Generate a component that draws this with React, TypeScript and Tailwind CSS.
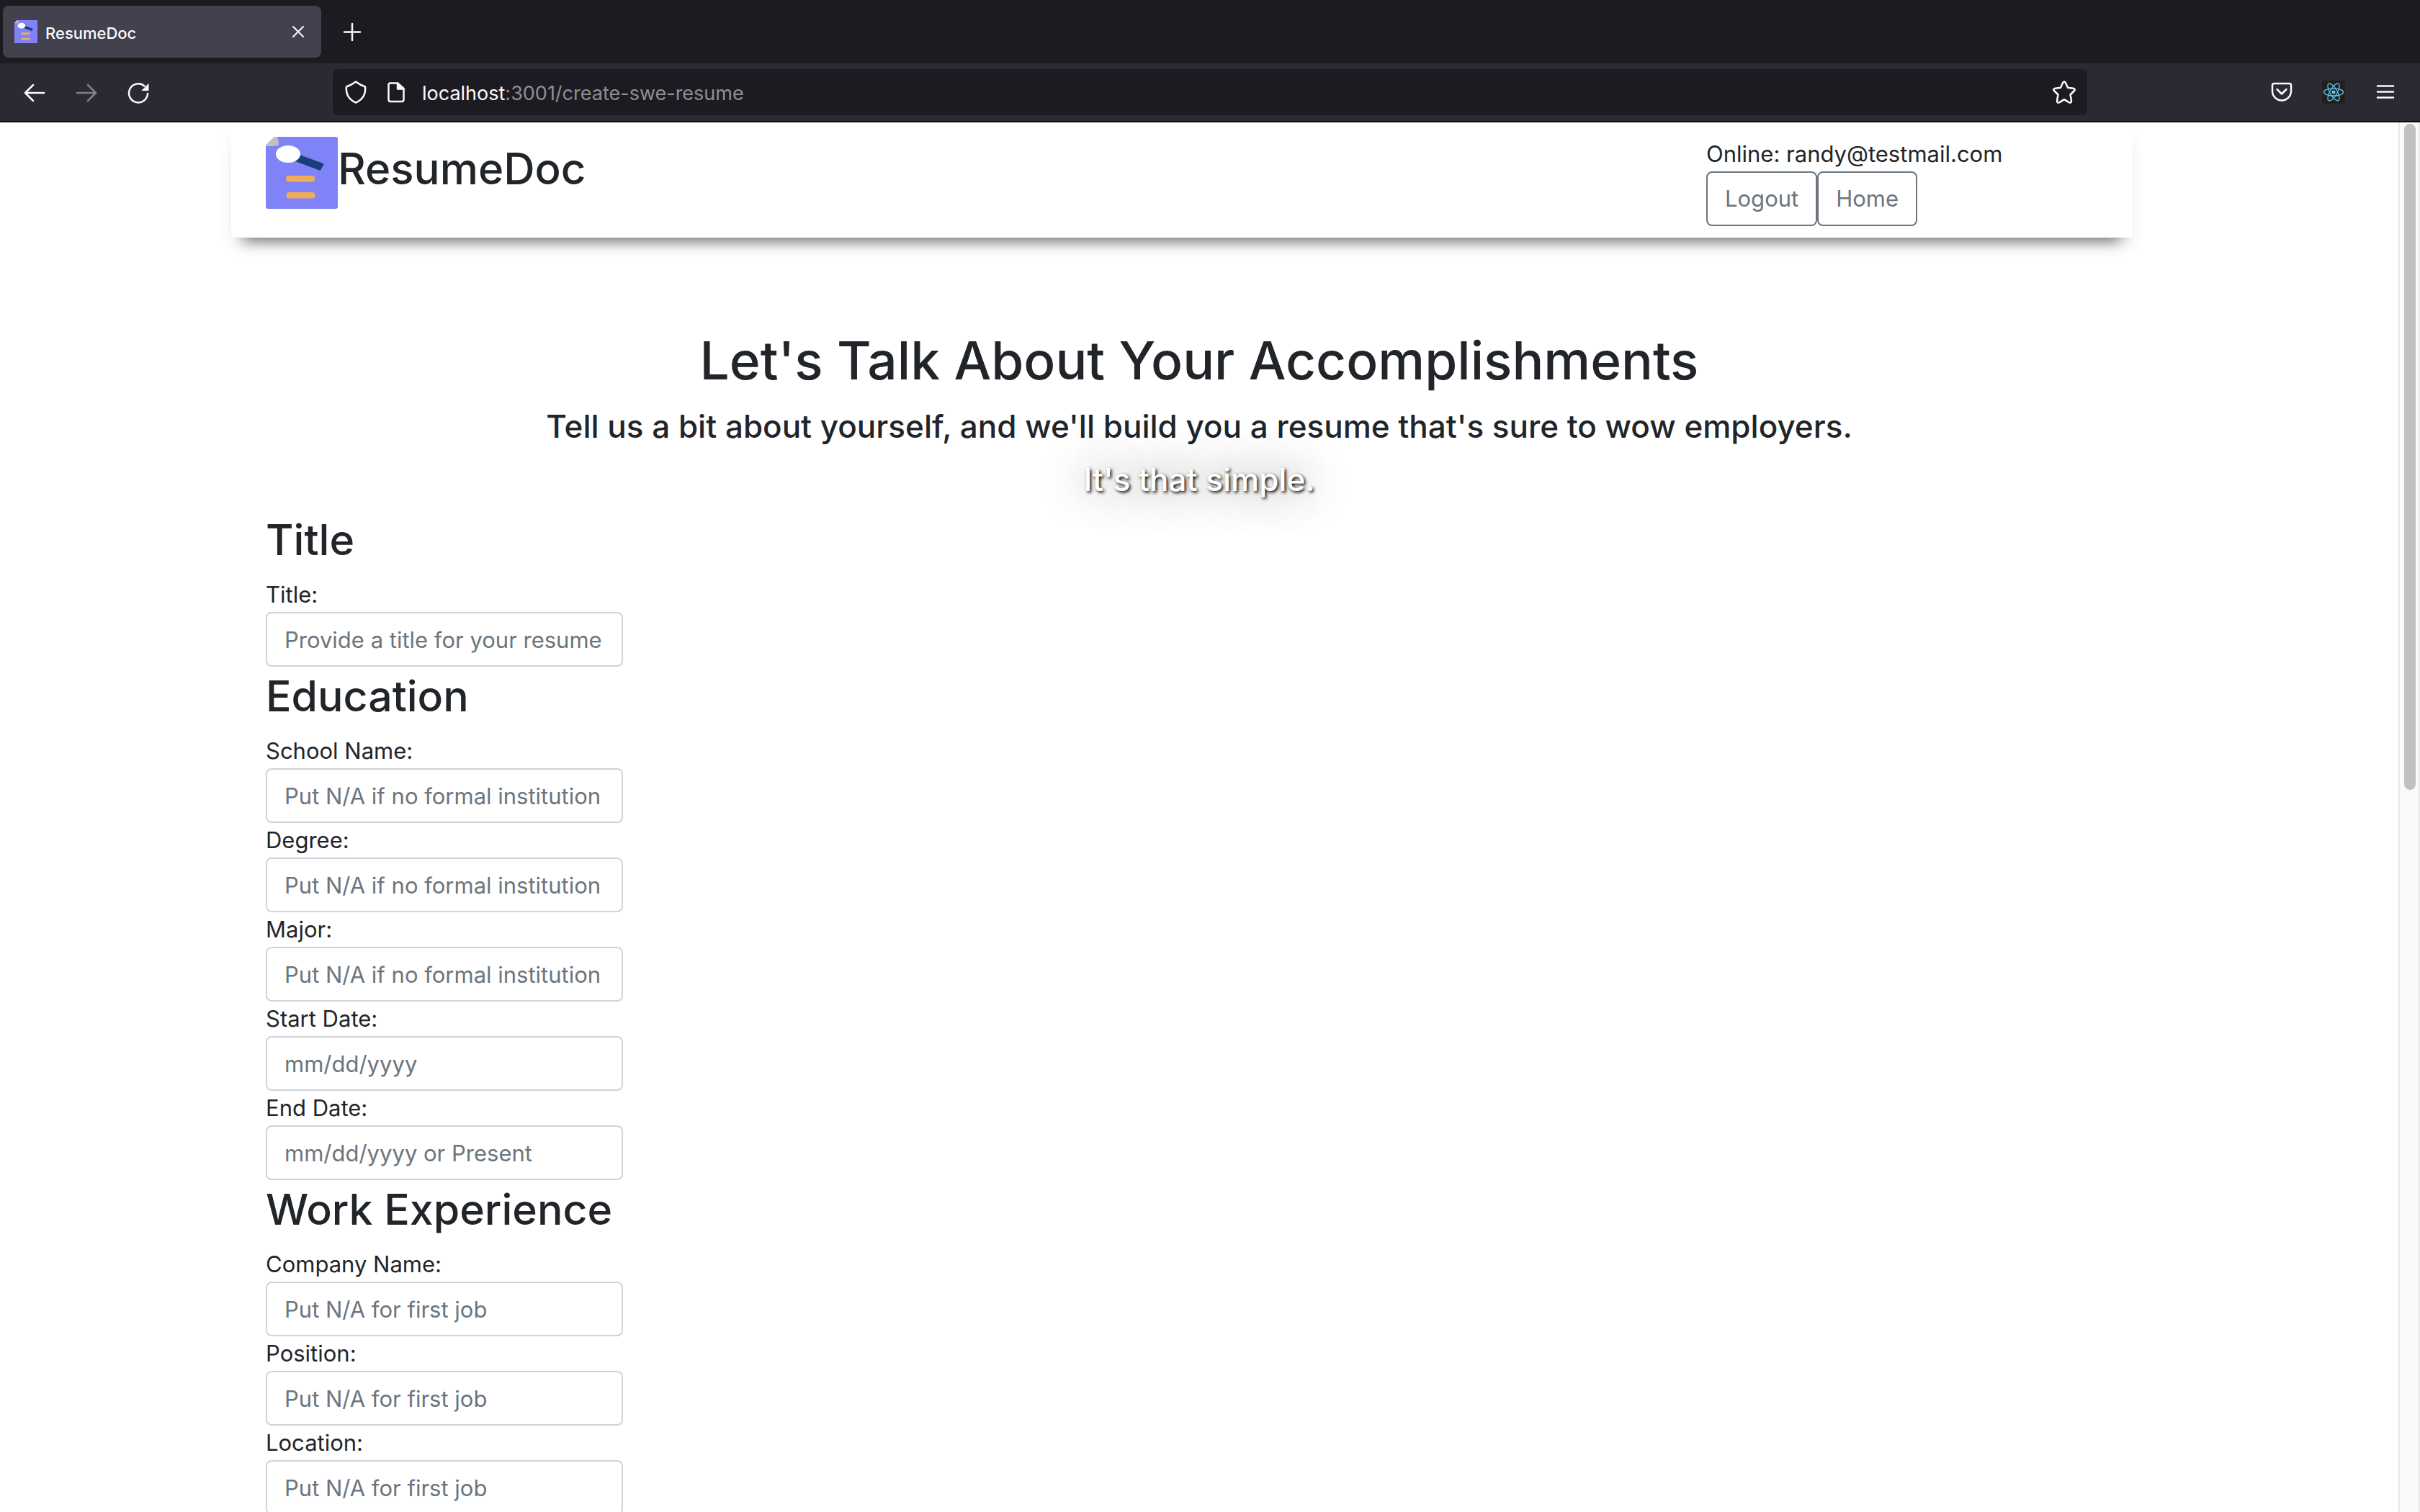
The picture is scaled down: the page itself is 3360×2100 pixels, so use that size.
import React from "react";

type Field = { id: string; label: string; placeholder: string };
type Section = { heading: string; fields: Field[] };

const sections: Section[] = [
  {
    heading: "Title",
    fields: [{ id: "title", label: "Title:", placeholder: "Provide a title for your resume" }],
  },
  {
    heading: "Education",
    fields: [
      { id: "school", label: "School Name:", placeholder: "Put N/A if no formal institution" },
      { id: "degree", label: "Degree:", placeholder: "Put N/A if no formal institution" },
      { id: "major", label: "Major:", placeholder: "Put N/A if no formal institution" },
      { id: "start-date", label: "Start Date:", placeholder: "mm/dd/yyyy" },
      { id: "end-date", label: "End Date:", placeholder: "mm/dd/yyyy or Present" },
    ],
  },
  {
    heading: "Work Experience",
    fields: [
      { id: "company", label: "Company Name:", placeholder: "Put N/A for first job" },
      { id: "position", label: "Position:", placeholder: "Put N/A for first job" },
      { id: "location", label: "Location:", placeholder: "Put N/A for first job" },
    ],
  },
];

function Logo({ className }: { className: string }) {
  return (
    <svg viewBox="0 0 100 100" preserveAspectRatio="none" className={className} aria-hidden="true">
      <path d="M12 0H97Q100 0 100 3V97Q100 100 97 100H3Q0 100 0 97V12Z" fill="#8083f8" />
      <path d="M12 0H16Q18 5 18 10Q18 12 15 12.500Q8 13 0 13V11.500Z" fill="#c0c0c0" />
      <path d="M47 25L81 37.500L75.500 47L41 34Z" fill="#173f7c" />
      <ellipse cx="31" cy="24" rx="17" ry="12" fill="#fff" />
      <rect x="28" y="54" width="40" height="8.500" rx="4" fill="#f0ad57" />
      <rect x="28.500" y="77" width="40" height="8.500" rx="4" fill="#f0ad57" />
    </svg>
  );
}

type IconProps = { children: React.ReactNode; className?: string };

function Icon({ children, className = "size-8" }: IconProps) {
  return (
    <svg
      viewBox="0 0 32 32"
      className={className}
      fill="none"
      stroke="currentColor"
      strokeWidth="2.500"
      strokeLinecap="round"
      strokeLinejoin="round"
      aria-hidden="true"
    >
      {children}
    </svg>
  );
}

function TabStrip() {
  return (
    <div className="flex h-[88px] shrink-0 items-center bg-[#1c1b22] pl-1 text-[#fbfbfe]">
      <div className="flex h-[72px] w-[442px] items-center rounded-lg bg-[#42414d] pr-4 pl-4">
        <Logo className="size-8" />
        <span className="ml-[11px] flex-1 pt-1 text-[22px] leading-8 font-medium">ResumeDoc</span>
        <button aria-label="Close tab">
          <Icon>
            <path d="M9 9L23 23M23 9L9 23" strokeWidth="2" />
          </Icon>
        </button>
      </div>
      <button aria-label="New tab" className="ml-[27px]">
        <Icon>
          <path d="M16 5V28M5 16.500H27" strokeWidth="2.500" />
        </Icon>
      </button>
    </div>
  );
}

function Toolbar() {
  return (
    <div className="flex h-[82px] shrink-0 items-center border-b-2 border-[#0c0c0d] bg-[#2b2a33] pr-8 pl-8 text-[#fbfbfe]">
      <div className="flex w-[430px] shrink-0 gap-10">
        <button aria-label="Back">
          <Icon>
            <path d="M29 17H3M14 6L3 17L14 28" />
          </Icon>
        </button>
        <button aria-label="Forward" disabled className="text-[#808086]">
          <Icon>
            <path d="M3 17H29M18 6L29 17L18 28" />
          </Icon>
        </button>
        <button aria-label="Reload">
          <Icon>
            <path d="M29 18A13 13 0 1 1 24.500 7.500" />
            <path d="M30 5V13.500H21.500Z" fill="currentColor" strokeWidth="1" />
          </Icon>
        </button>
      </div>
      <div className="flex h-16 min-w-0 flex-1 items-center rounded-lg bg-[#1c1b22] px-4">
        <Icon>
          <path d="M16 1.500Q22 6 29 8.500C30 18 26 26 16 30.500C6 26 2 18 3 8.500Q10 6 16 1.500Z" />
        </Icon>
        <Icon className="ml-6 size-8">
          <path d="M7 3.500H18L26.500 11V26Q26.500 29 24 29H8Q5.500 29 5.500 26V6Q5.500 3.500 8 3.500Z" />
          <path d="M18 3.500V11.500H26.500Z" fill="currentColor" />
        </Icon>
        <p className="ml-5 min-w-0 flex-1 pt-1 text-[27px] leading-9 text-[#8f8f94]">
          <span className="text-[#fbfbfe]">localhost</span>:3001/create-swe-resume
        </p>
        <button aria-label="Bookmark this page">
          <Icon>
            <path d="M14.200 2.800Q16 0 17.800 2.800L21 9.800L28.500 10.700Q32 11.500 30 14L24.500 19.500L26 28Q26 31.500 23 30.300L16 26.200L9 30.300Q6 31.500 6 28L7.500 19.500L2 14Q0 11.500 3.500 10.700L11 9.800Z" />
          </Icon>
        </button>
      </div>
      <div className="flex shrink-0 gap-10 pl-[254px]">
        <button aria-label="Save to Pocket">
          <Icon>
            <path d="M5.500 4H26.500Q29 4 29 6.500V14.500A13 13 0 0 1 3 14.500V6.500Q3 4 5.500 4Z" />
            <path d="M9.500 12L16 18.500L22.500 12" />
          </Icon>
        </button>
        <button aria-label="React Developer Tools">
          <svg viewBox="0 0 32 32" className="size-8" fill="none" stroke="#61c4ee" strokeWidth="1.300" aria-hidden="true">
            <rect width="32" height="32" rx="3" fill="#20201f" stroke="none" />
            <ellipse cx="16" cy="16" rx="13.500" ry="5" />
            <ellipse cx="16" cy="16" rx="13.500" ry="5" transform="rotate(60 16 16)" />
            <ellipse cx="16" cy="16" rx="13.500" ry="5" transform="rotate(120 16 16)" />
            <circle cx="16" cy="16" r="2.500" fill="#61c4ee" stroke="none" />
          </svg>
        </button>
        <button aria-label="Open application menu">
          <Icon>
            <path d="M5 7.500H27M5 15.500H27M5 23.500H27" />
          </Icon>
        </button>
      </div>
    </div>
  );
}

function SiteHeader() {
  return (
    <header className="-ml-12 flex h-40 items-start bg-white pt-5 pl-12 shadow-[0_20px_20px_-16px_rgba(0,0,0,0.6),0_12px_24px_rgba(0,0,0,0.03)]">
      <a href="#home" className="flex items-start">
        <Logo className="size-[100px]" />
        <span className="text-[60px] leading-[88px] font-medium">ResumeDoc</span>
      </a>
      <div className="ml-auto w-[592px]">
        <p className="leading-[48px]">Online: randy@testmail.com</p>
        <div className="flex text-[#6c757d]">
          <button className="h-[76px] rounded-lg border-2 border-[#6c757d] px-6">Logout</button>
          <button className="h-[76px] rounded-lg border-2 border-[#6c757d] px-6">Home</button>
        </div>
      </div>
    </header>
  );
}

function FormSection({ heading, fields }: Section) {
  return (
    <section className="flex flex-col items-start">
      <h2 className="mb-[11px] text-[59px] leading-[82px] font-medium">{heading}</h2>
      {fields.map((field) => (
        <div key={field.id} className="flex flex-col items-start">
          <label htmlFor={field.id} className="leading-[48px]">
            {field.label}
          </label>
          <input
            id={field.id}
            type="text"
            placeholder={field.placeholder}
            className="h-[76px] w-[496px] rounded-lg border-2 border-[#ced4da] bg-white px-6 placeholder:text-[#6c757d] placeholder:opacity-100"
          />
        </div>
      ))}
    </section>
  );
}

export default function App() {
  return (
    <div className="flex h-screen flex-col overflow-hidden bg-white font-['Inter',sans-serif] text-[31px] text-[#212529]">
      <TabStrip />
      <Toolbar />
      <div className="flex min-h-0 flex-1">
        <div className="min-w-0 flex-1 overflow-hidden">
          <main className="mx-auto max-w-[2640px] px-6">
            <SiteHeader />
            <div className="pt-[119px] text-center font-medium">
              <h1 className="mb-2 text-[73px] leading-[104px]">Let's Talk About Your Accomplishments</h1>
              <h3 className="mb-3 text-[44px] leading-[62px]">
                Tell us a bit about yourself, and we'll build you a resume that's sure to wow employers.
              </h3>
              <h3 className="mb-3 text-[44px] leading-[62px] text-white [text-shadow:2px_2px_4px_black,0_0_56px_rgba(0,0,0,0.5)]">
                It's that simple.
              </h3>
            </div>
            <form>
              {sections.map((section) => (
                <FormSection key={section.heading} {...section} />
              ))}
            </form>
          </main>
        </div>
        <div className="w-[30px] shrink-0 border-x-2 border-[#e8e8e8] bg-[#fafafa] px-[6px] pt-[2px]">
          <div className="ml-auto h-[925px] w-4 rounded-full bg-[#c1c1c1]" />
        </div>
      </div>
    </div>
  );
}
